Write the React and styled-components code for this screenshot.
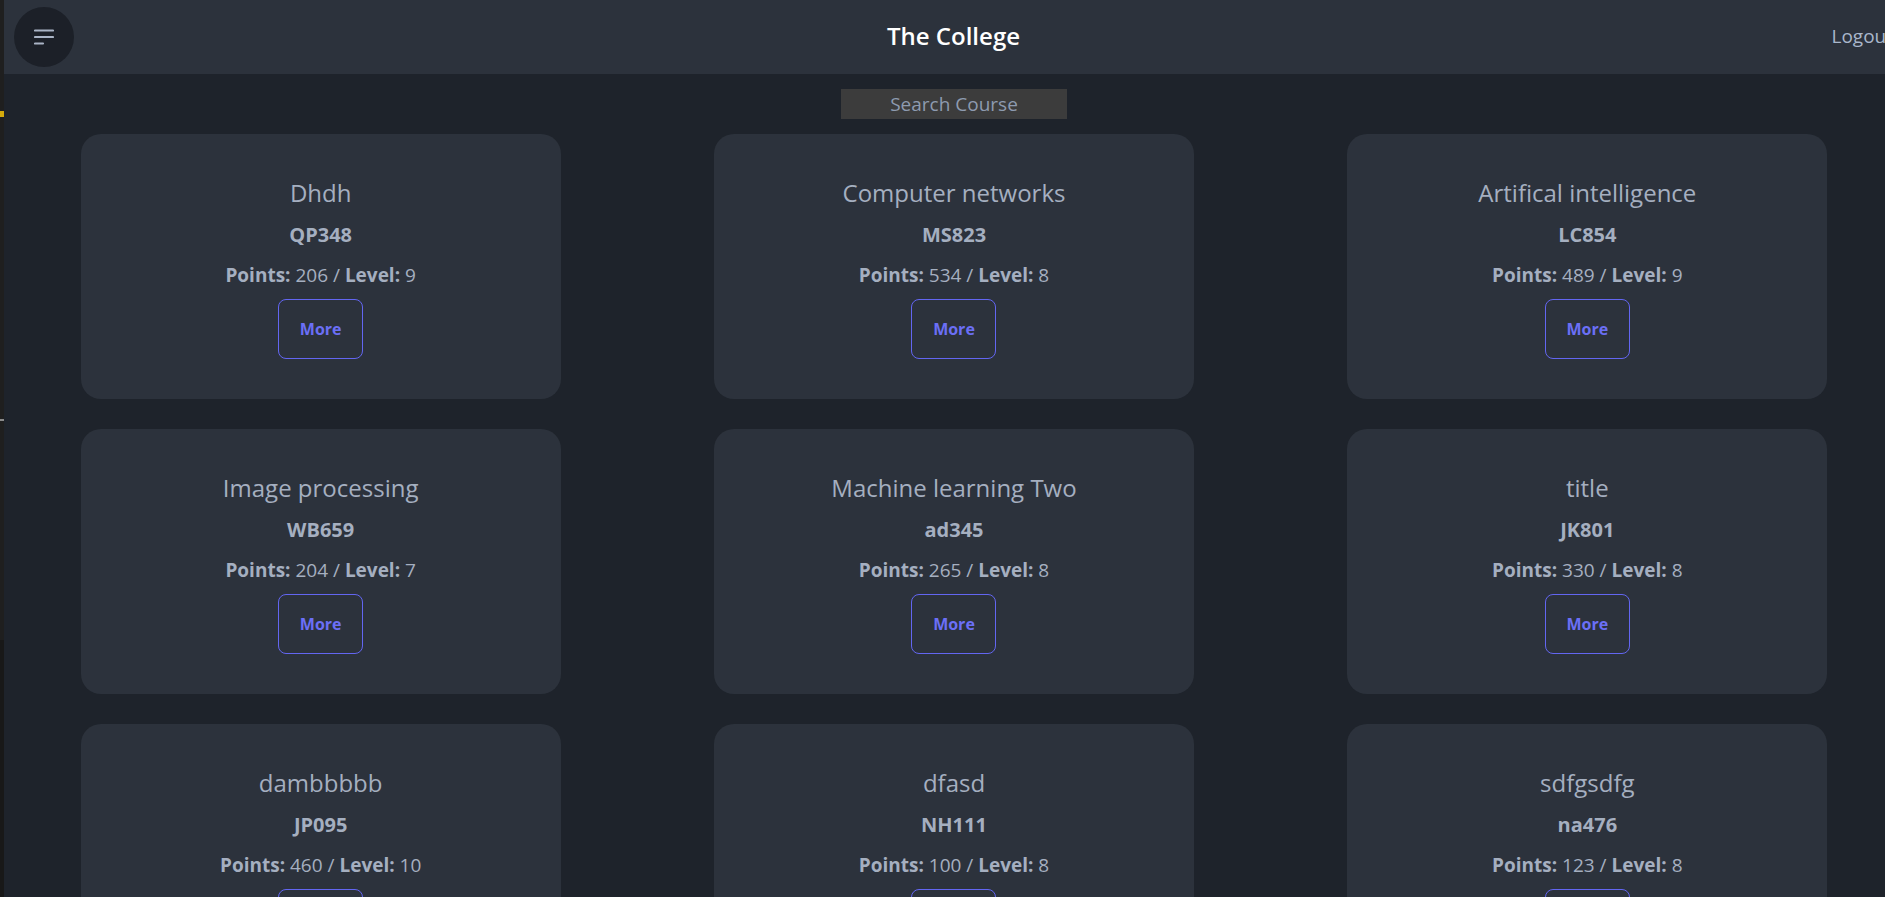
import React from "react";
import styled, { createGlobalStyle } from "styled-components";

const courses = [
  { title: "Dhdh", code: "QP348", points: 206, level: 9 },
  { title: "Computer networks", code: "MS823", points: 534, level: 8 },
  { title: "Artifical intelligence", code: "LC854", points: 489, level: 9 },
  { title: "Image processing", code: "WB659", points: 204, level: 7 },
  { title: "Machine learning Two", code: "ad345", points: 265, level: 8 },
  { title: "title", code: "JK801", points: 330, level: 8 },
  { title: "dambbbbb", code: "JP095", points: 460, level: 10 },
  { title: "dfasd", code: "NH111", points: 100, level: 8 },
  { title: "sdfgsdfg", code: "na476", points: 123, level: 8 },
];

const GlobalStyle = createGlobalStyle`
  body {
    margin: 0;
    background: #1e232b;
    overflow: hidden;
    font-family: "Open Sans", "Noto Sans", sans-serif;
  }
`;

const App = () => {
  return (
    <Page>
      <GlobalStyle />
      <Strip />
      <Main>
        <Header>
          <MenuButton>
            <svg width="20" height="16" viewBox="0 0 20 16">
              <path
                d="M1 1.5h18M1 8h18M1 14.5h8"
                stroke="#aab4c6"
                strokeWidth="2.2"
                strokeLinecap="round"
              />
            </svg>
          </MenuButton>
          <Title>The College</Title>
          <Logout>Logout</Logout>
        </Header>
        <SearchRow>
          <Search placeholder="Search Course" />
        </SearchRow>
        <Grid>
          {courses.map((c) => (
            <Card key={c.code}>
              <CardTitle>{c.title}</CardTitle>
              <Code>{c.code}</Code>
              <Info>
                <b>Points:</b> {c.points} / <b>Level:</b> {c.level}
              </Info>
              <MoreButton>More</MoreButton>
            </Card>
          ))}
        </Grid>
      </Main>
    </Page>
  );
};

const Page = styled.div`
  display: flex;
  height: 897px;
  overflow: hidden;
`;

const Strip = styled.div`
  position: relative;
  width: 4px;
  flex-shrink: 0;
  background: linear-gradient(#1f1f1f 0, #1f1f1f 640px, #181818 640px);

  &::before {
    content: "";
    position: absolute;
    left: 0;
    top: 111px;
    width: 4px;
    height: 6px;
    background: #d4aa0c;
  }

  &::after {
    content: "";
    position: absolute;
    left: 0;
    top: 419px;
    width: 4px;
    height: 2px;
    background: #8a8a8a;
  }
`;

const Main = styled.div`
  width: 1900px;
  flex-shrink: 0;
`;

const Header = styled.header`
  height: 74px;
  background: #2c323c;
  display: grid;
  grid-template-columns: 1fr auto 1fr;
  align-items: center;
  padding: 0 11px 0 10px;
`;

const MenuButton = styled.button`
  width: 60px;
  height: 60px;
  border-radius: 50%;
  border: none;
  background: #1c2028;
  display: flex;
  align-items: center;
  justify-content: center;
  padding: 0;
  cursor: pointer;
`;

const Title = styled.h1`
  margin: 0;
  padding-bottom: 4px;
  font-size: 24px;
  font-weight: 600;
  color: #ffffff;
`;

const Logout = styled.span`
  justify-self: end;
  padding-bottom: 3px;
  font-size: 19px;
  color: #a9b7cb;
  cursor: pointer;
`;

const SearchRow = styled.div`
  display: flex;
  justify-content: center;
  padding-top: 15px;
`;

const Search = styled.input`
  width: 226px;
  height: 30px;
  box-sizing: border-box;
  border: none;
  background: #3c3c3c;
  color: #c8d0dc;
  text-align: center;
  font-family: "Open Sans", sans-serif;
  font-size: 19px;
  outline: none;

  &::placeholder {
    color: #8e9bb0;
  }
`;

const Grid = styled.div`
  display: grid;
  grid-template-columns: repeat(3, 480px);
  justify-content: space-around;
  row-gap: 30px;
  padding-top: 15px;
`;

const Card = styled.div`
  height: 265px;
  box-sizing: border-box;
  background: #2c323c;
  border-radius: 20px;
  display: flex;
  flex-direction: column;
  align-items: center;
  padding-top: 43px;
  color: #a5afc0;
`;

const CardTitle = styled.h2`
  margin: 0;
  font-size: 24px;
  font-weight: 500;
  line-height: 32px;
`;

const Code = styled.div`
  margin-top: 14px;
  font-size: 20px;
  font-weight: 700;
  line-height: 24px;
`;

const Info = styled.p`
  margin: 16px 0 0;
  font-size: 19px;
  line-height: 24px;

  b {
    font-weight: 700;
  }
`;

const MoreButton = styled.button`
  margin-top: 12px;
  width: 85px;
  height: 60px;
  background: transparent;
  border: 1px solid #6366f1;
  border-radius: 8px;
  color: #6b6ff6;
  font-family: "Open Sans", sans-serif;
  font-size: 16px;
  font-weight: 700;
  cursor: pointer;
`;

export default App;
